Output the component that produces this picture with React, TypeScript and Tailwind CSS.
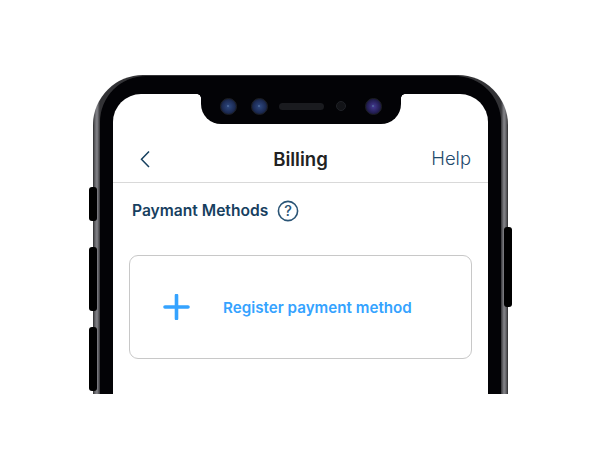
const Lens = ({ c }: { c: string }) => (
  <div className="w-[17px] h-[17px] rounded-full border border-[#1e2026] flex items-center justify-center" style={{ background: c }}>
    <div className="w-[2px] h-[2px] rounded-full bg-[#4f6a98]" />
  </div>
);

const blue = "radial-gradient(circle,#2f4a82 0%,#1d2c56 55%,#0b0f1c 100%)";
const violet = "radial-gradient(circle,#453a94 0%,#252058 55%,#0e0c1e 100%)";

export default function App() {
  return (
    <div className="w-[601px] h-[467px] bg-white overflow-hidden pt-[75px] pl-[93px] font-['Inter',sans-serif]">
      <div className="relative w-[415px] h-[319px]">
        {/* side buttons */}
        <div className="absolute left-[-4px] top-[112px] w-[8px] h-[34px] rounded-[3px] bg-black z-10" />
        <div className="absolute left-[-4px] top-[172px] w-[8px] h-[64px] rounded-[3px] bg-black z-10" />
        <div className="absolute left-[-4px] top-[252px] w-[8px] h-[64px] rounded-[3px] bg-black z-10" />
        <div className="absolute right-[-4px] top-[152px] w-[8px] h-[80px] rounded-[3px] bg-black z-10" />
        {/* body */}
        <div className="h-full rounded-t-[50px] bg-[linear-gradient(90deg,#2a2a2c_0px,#66666a_2px,#85858a_4px,#333336_7px,#333336_408px,#85858a_411px,#66666a_413px,#2a2a2c_415px)] pt-[1px] px-[7px]">
          <div className="h-full rounded-t-[46px] bg-[#030306] pt-[18px] px-[13px]">
            <div className="flex flex-col h-full rounded-t-[28px] bg-white overflow-hidden text-[#17405f]">
              {/* notch */}
              <div className="flex justify-center">
                <div className="relative w-[200px] h-[30px] bg-[#030306] rounded-b-[20px] flex items-center pl-[19px] pb-[6px]">
                  <div className="absolute left-[-4px] top-0 w-[4px] h-[4px] bg-[radial-gradient(circle_at_0_100%,#fff_3.5px,#030306_4px)]" />
                  <div className="absolute right-[-4px] top-0 w-[4px] h-[4px] bg-[radial-gradient(circle_at_100%_100%,#fff_3.5px,#030306_4px)]" />
                  <div className="flex items-center gap-[14px]">
                    <Lens c={blue} />
                    <Lens c={blue} />
                  </div>
                  <div className="ml-[11px] w-[45px] h-[7px] rounded-full bg-[#1a1b1f]" />
                  <div className="ml-[12px] w-[10px] h-[10px] rounded-full bg-[#121317] border border-[#202227]" />
                  <div className="ml-[19px]"><Lens c={violet} /></div>
                </div>
              </div>
              {/* header */}
              <div className="h-[59px] border-b border-[#d9d9d9] pt-[22px] px-[17px] grid grid-cols-3 items-start">
                <svg width="20" height="20" viewBox="0 0 20 20" fill="none" className="ml-[6px] mt-[3px]">
                  <path d="M13 2.5 L5.5 10.3 L13 18" stroke="#17405f" strokeWidth="1.5" />
                </svg>
                <span className="text-center text-[18.6px] leading-[26px] font-semibold text-[#222222] whitespace-nowrap">Billing</span>
                <span className="text-right text-[18.4px] leading-[24px] font-light text-[#1f4a6c]">Help</span>
              </div>
              {/* content */}
              <div className="px-[16px]">
                <div className="flex items-center pl-[3px] mt-[16px] h-[24px] gap-[9px]">
                  <span className="text-[15.6px] font-semibold text-[#17405f] leading-[24px]">Paymant Methods</span>
                  <svg width="22" height="22" viewBox="0 0 22 22" fill="none">
                    <circle cx="11" cy="11" r="9.6" stroke="#2a5475" strokeWidth="1.6" />
                    <text x="11" y="16" textAnchor="middle" fontSize="14.5" fontWeight="500" fill="#2a5475" fontFamily="Inter, sans-serif">?</text>
                  </svg>
                </div>
                <div className="mt-[32px] h-[104px] w-[343px] rounded-[9px] border border-[#c8c8c8] flex items-center pl-[33px]">
                  <svg width="27" height="26" viewBox="0 0 27 26" fill="none">
                    <path d="M13.5 1.5 V24.5 M2 13 H25" stroke="#35a3ff" strokeWidth="3.6" strokeLinecap="round" />
                  </svg>
                  <span className="ml-[33px] pt-[2px] text-[15.2px] font-semibold text-[#35a3ff]">Register payment method</span>
                </div>
              </div>
            </div>
          </div>
        </div>
      </div>
    </div>
  );
}
